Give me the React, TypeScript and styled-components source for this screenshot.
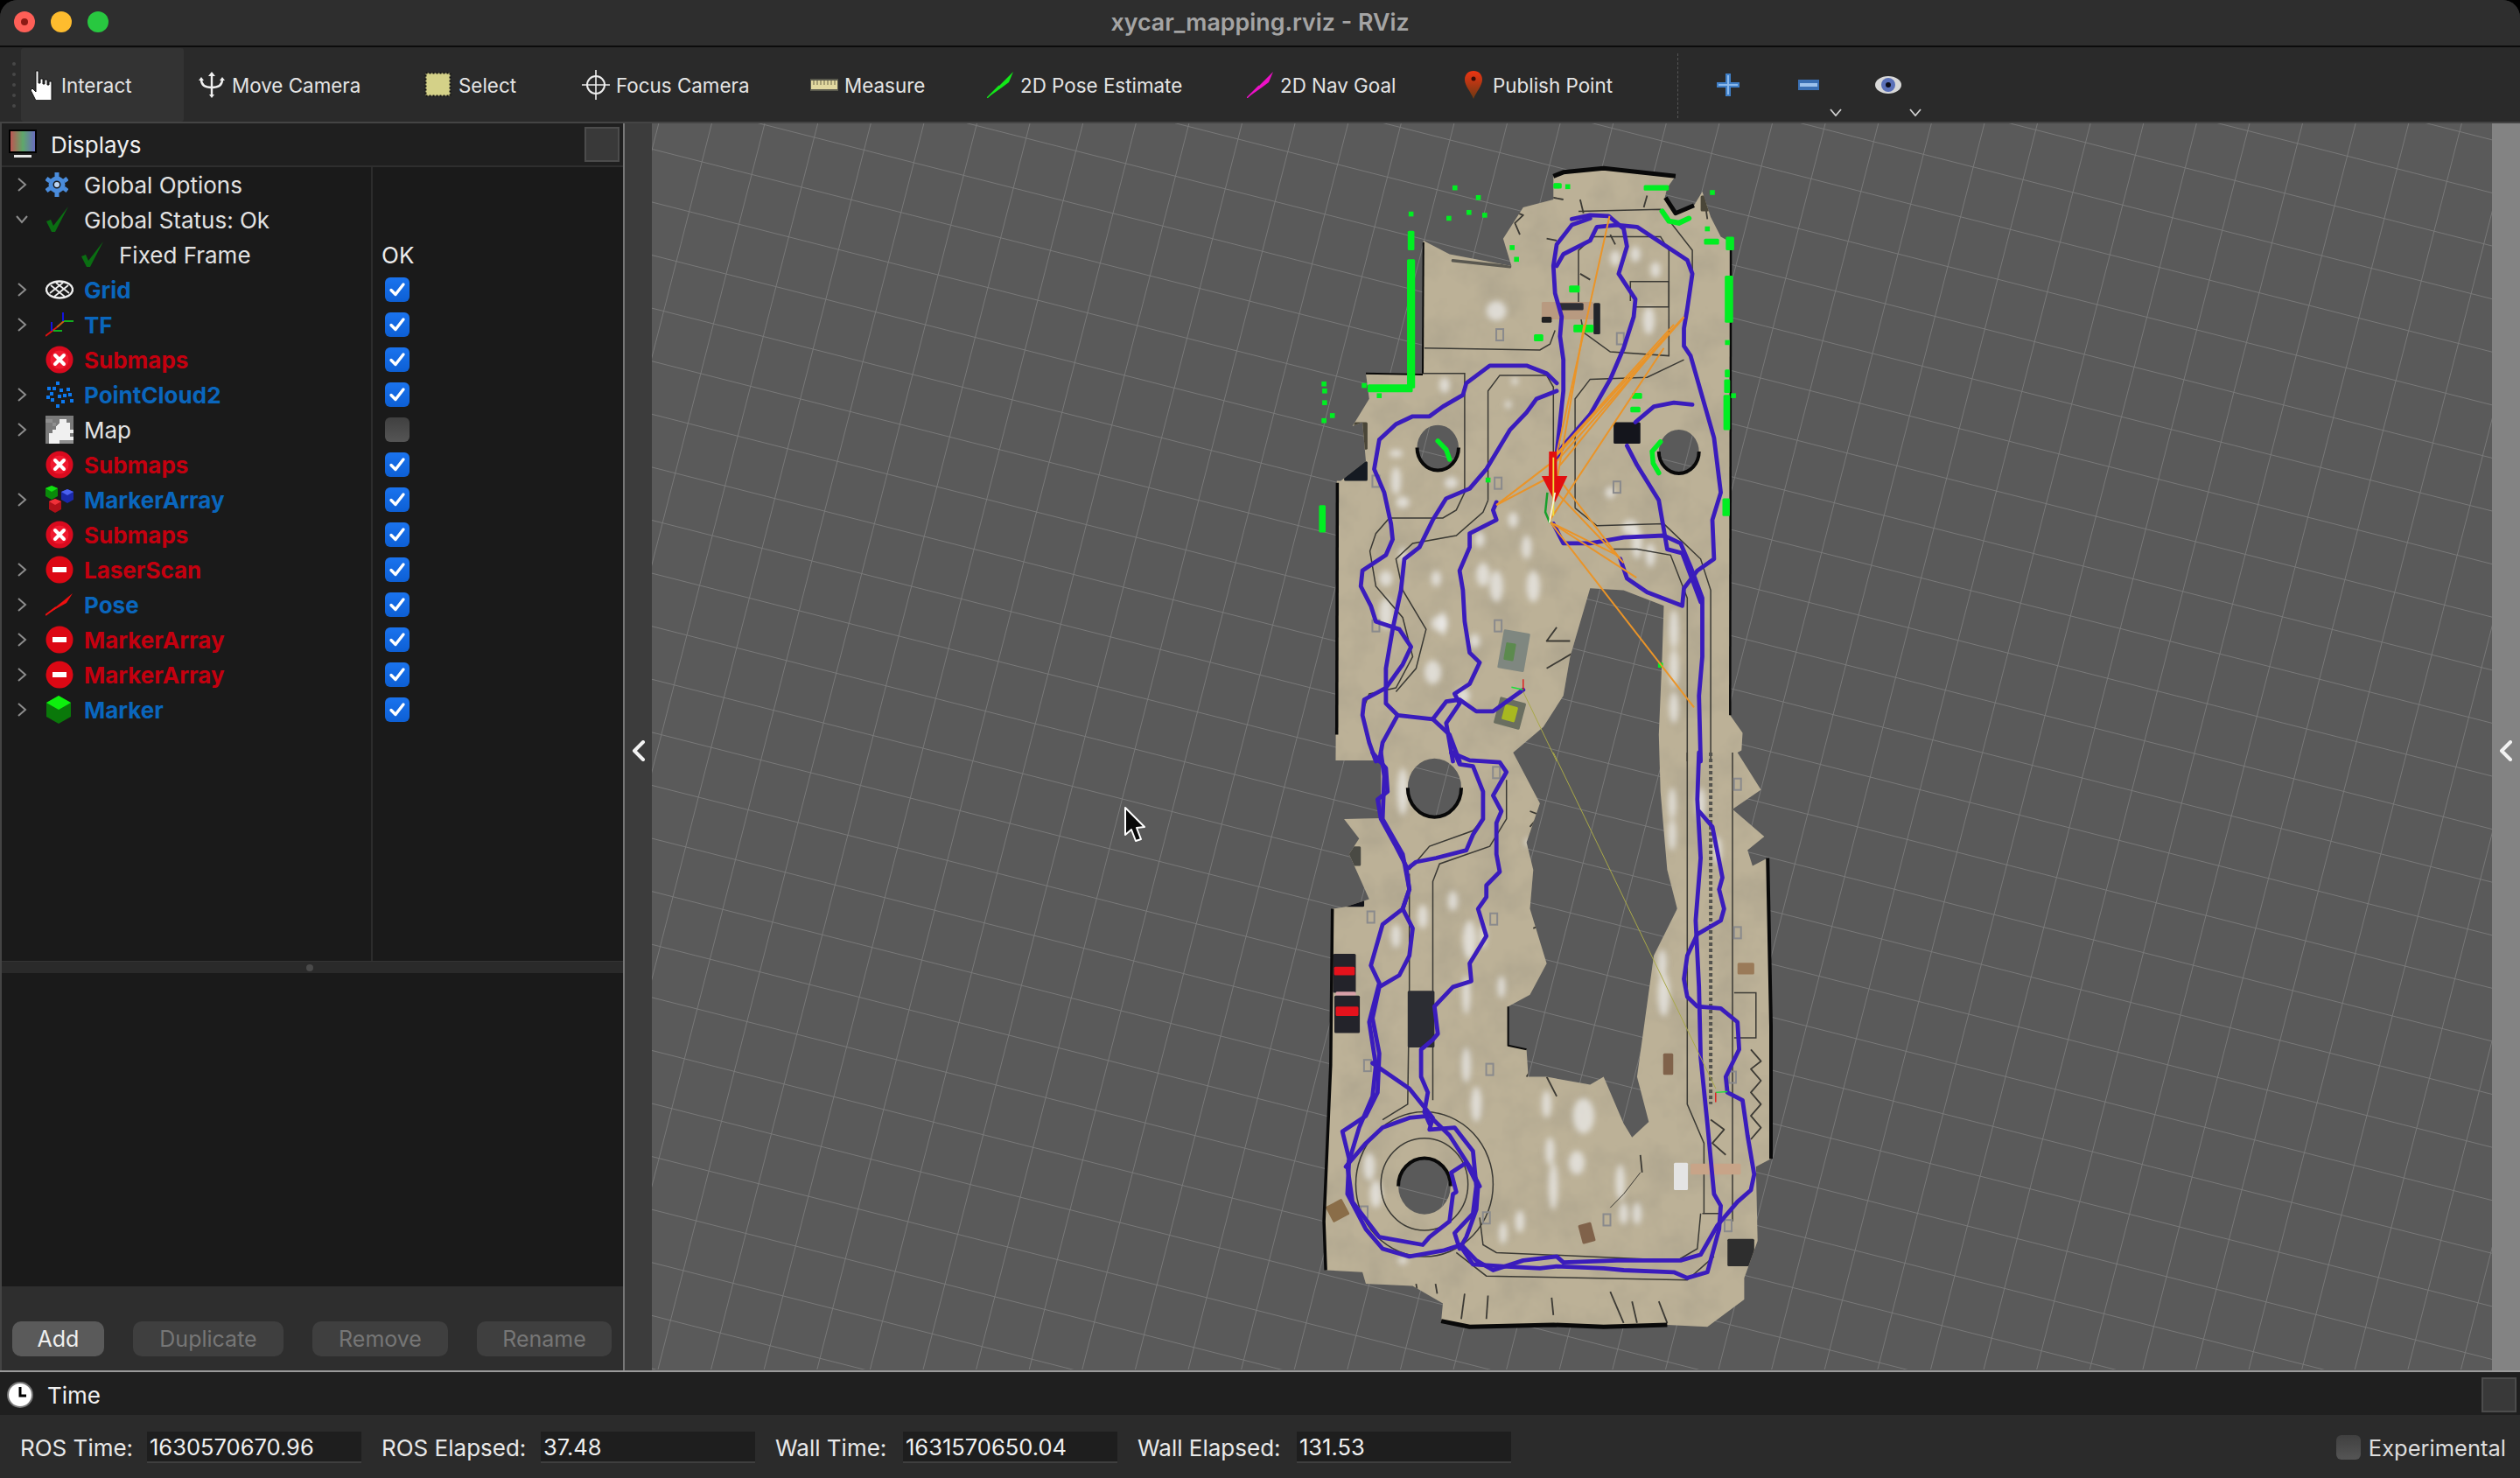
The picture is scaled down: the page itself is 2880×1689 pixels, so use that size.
import React from 'react';
import styled, { createGlobalStyle } from 'styled-components';

const GlobalStyle = createGlobalStyle`
  html, body {
    margin: 0;
    background: #000;
    overflow: hidden;
  }
  * { box-sizing: border-box; }
`;

const FONT = `Inter, "Liberation Sans", sans-serif`;

const Window = styled.div`
  width: 2880px;
  height: 1689px;
  display: flex;
  flex-direction: column;
  border-radius: 20px 20px 0 0;
  overflow: hidden;
  background: #2b2b2b;
  font-family: ${FONT};
  color: #e8e8e8;
`;

const TitleBar = styled.div`
  height: 54px;
  flex: none;
  display: flex;
  align-items: center;
  position: relative;
  padding-left: 16px;
  gap: 18px;
  background: #2e2e2e;
  border-bottom: 2px solid #0c0c0c;
`;

const Light = styled.span<{ $color: string }>`
  width: 24px;
  height: 24px;
  border-radius: 50%;
  background: ${p => p.$color};
  display: flex;
  align-items: center;
  justify-content: center;
  margin-top: -2px;
`;

const LightDot = styled.span`
  width: 8px;
  height: 8px;
  border-radius: 50%;
  background: #8c1a14;
`;

const Title = styled.div`
  flex: 1;
  text-align: center;
  font-size: 26.8px;
  font-weight: 600;
  color: #a4a4a4;
  margin-top: -3px;
  margin-right: 142px;
`;

const Toolbar = styled.div`
  height: 87px;
  flex: none;
  display: flex;
  align-items: stretch;
  background: #2a2a2a;
  border-bottom: 2px solid #444;
  padding-top: 1px;
`;

const Grip = styled.div`
  width: 24px;
  flex: none;
  display: flex;
  flex-direction: column;
  justify-content: center;
  align-items: center;
  gap: 8px;
  padding-left: 8px;
  span { width: 4px; height: 4px; border-radius: 50%; background: #474747; }
`;

const Tool = styled.div<{ $active?: boolean }>`
  display: flex;
  align-items: center;
  gap: 7px;
  padding: 0 0 0 9px;
  margin-right: 7px;
  border-radius: 3px;
  background: ${p => (p.$active ? '#333333' : 'transparent')};
  font-size: 22.4px;
  color: #e4e4e4;
  white-space: nowrap;
`;

const ToolLabel = styled.span<{ $width: number }>`
  width: ${p => p.$width}px;
`;

const Separator = styled.div`
  width: 0;
  margin: 6px 0 4px 0;
  border-left: 1px dashed #555;
`;

const ViewTool = styled.div<{ $width: number; $left: number }>`
  width: ${p => p.$width}px;
  margin-left: ${p => p.$left}px;
  flex: none;
  position: relative;
  display: flex;
  align-items: center;
  justify-content: center;
`;

const Caret = styled.svg`
  position: absolute;
  right: -3px;
  bottom: 6px;
`;

const Main = styled.div`
  flex: 1;
  min-height: 0;
  display: flex;
`;

const Sidebar = styled.div`
  width: 712px;
  flex: none;
  display: flex;
  flex-direction: column;
  border-left: 2px solid #444;
  background: #1a1a1a;
`;

const DockHeader = styled.div<{ $height: number; $nudge?: number }>`
  height: ${p => p.$height}px;
  flex: none;
  display: flex;
  align-items: center;
  gap: 16px;
  padding: ${p => p.$nudge ?? 0}px 4px 0 8px;
  background: #1f1f1f;
  font-size: 26px;
  color: #f0f0f0;
`;

const DockTitle = styled.span`
  flex: 1;
`;

const FloatButton = styled.div`
  width: 40px;
  height: 40px;
  background: #393939;
  border: 2px solid #4c4c4c;
`;

const Tree = styled.div`
  height: 909px;
  flex: none;
  border-top: 2px solid #2e2e2e;
  background: #1a1a1a;
  display: flex;
  flex-direction: column;
  position: relative;
`;

const Row = styled.div`
  height: 40px;
  flex: none;
  display: flex;
  align-items: center;
  font-size: 26px;
`;

const NameCell = styled.div<{ $indent: number }>`
  width: 424px;
  height: 100%;
  flex: none;
  display: flex;
  align-items: center;
  padding-left: ${p => p.$indent}px;
  border-right: 2px solid #2c2c2c;
`;

const Arrow = styled.div`
  width: 50px;
  flex: none;
  display: flex;
  align-items: center;
  padding-left: 16px;
`;

const IconSlot = styled.div`
  width: 44px;
  flex: none;
  display: flex;
  align-items: center;
`;

const Name = styled.span<{ $tone: 'plain' | 'blue' | 'red' }>`
  color: ${p => (p.$tone === 'blue' ? '#0a66bd' : p.$tone === 'red' ? '#c4000f' : '#e2e2e2')};
  font-weight: ${p => (p.$tone === 'plain' ? 400 : 700)};
  white-space: nowrap;
`;

const ValueCell = styled.div`
  padding-left: 10px;
  flex: 1;
  display: flex;
  align-items: center;
  color: #ececec;
`;

const Check = styled.div<{ $on: boolean }>`
  width: 28px;
  height: 28px;
  margin-left: 4px;
  border-radius: 6px;
  display: flex;
  align-items: center;
  justify-content: center;
  background: ${p => (p.$on ? 'linear-gradient(#1a73ee, #0d5fd4)' : 'linear-gradient(#404040, #555)')};
`;

const TreeFill = styled.div`
  flex: 1;
  width: 424px;
  border-right: 2px solid #2c2c2c;
`;

const Splitter = styled.div`
  height: 14px;
  flex: none;
  background: #2a2a2a;
  border-top: 1px solid #333;
  display: flex;
  align-items: center;
  justify-content: center;
  padding-right: 6px;
  span { width: 8px; height: 8px; border-radius: 50%; background: #4a4a4a; }
`;

const Description = styled.div`
  flex: 1;
  background: #1a1a1a;
`;

const ButtonBar = styled.div`
  height: 96px;
  flex: none;
  background: #2e2e2e;
  padding: 40px 0 0 12px;
  display: flex;
  gap: 33px;
`;

const PanelButton = styled.div<{ $width: number; $off?: boolean }>`
  width: ${p => p.$width}px;
  height: 40px;
  border-radius: 10px;
  display: flex;
  align-items: center;
  justify-content: center;
  font-size: 25px;
  background: ${p => (p.$off ? '#3f3f3f' : '#5a5a5a')};
  color: ${p => (p.$off ? '#767676' : '#efefef')};
`;

const LeftStrip = styled.div`
  width: 33px;
  flex: none;
  background: #3c3c3c;
  border-left: 2px solid #777;
  display: flex;
  align-items: center;
  justify-content: center;
  padding-top: 8px;
`;

const Viewport = styled.div`
  flex: 1;
  min-width: 0;
  background: #5a5a5a;
  svg { display: block; }
`;

const RightStrip = styled.div`
  width: 32px;
  flex: none;
  background: #838383;
  display: flex;
  align-items: center;
  justify-content: center;
  padding-top: 8px;
`;

const TimeDock = styled.div`
  height: 123px;
  flex: none;
  display: flex;
  flex-direction: column;
  border-top: 2px solid #9a9a9a;
`;

const TimeBar = styled.div`
  flex: 1;
  display: flex;
  align-items: center;
  background: #2b2b2b;
  font-size: 26px;
  padding: 2px 16px 0 0;
`;

const Stamp = styled.div`
  display: flex;
  align-items: center;
  margin-left: 23px;
  color: #e8e8e8;
  font-size: 26px;
  white-space: nowrap;
`;

const StampLabel = styled.span<{ $width: number }>`
  width: ${p => p.$width}px;
`;

const Field = styled.div`
  width: 245px;
  height: 36px;
  background: #1e1e1e;
  border-bottom: 2px solid #3f3f3f;
  padding-left: 3px;
  display: flex;
  align-items: center;
  font-size: 25.5px;
  color: #f0f0f0;
`;

const Experimental = styled.div`
  margin-left: auto;
  display: flex;
  align-items: center;
  gap: 9px;
  font-size: 25.5px;
  color: #dedede;
`;

const PlainCheck = styled(Check)`
  margin: 0;
`;

// --- map drawing: point lists are read off two crops of the view, so they go through these two scalers
type Pt = [number, number];
const SX = 600 / 1568;
const SY = 700 / 1568;
const T = (x: number, y: number): Pt => [1450 + x * SX, 170 + y * SY];
const B = (x: number, y: number): Pt => [1450 + x * SX, 860 + y * SY];
const parse = (map: typeof T, s: string): Pt[] =>
  s.trim().split(/\s+/).map(p => {
    const [x, y] = p.split(',').map(Number);
    return map(x, y);
  });
const line = (pts: Pt[], close = false) =>
  'M' + pts.map(p => `${p[0].toFixed(1)} ${p[1].toFixed(1)}`).join('L') + (close ? 'Z' : '');
const tp = (s: string) => line(parse(T, s));
const bp = (s: string) => line(parse(B, s));

const ellipsePath = ([cx, cy]: Pt, rx: number, ry: number) => {
  const a = rx * SX;
  const b = ry * SY;
  return `M${cx - a} ${cy}a${a} ${b} 0 1 0 ${2 * a} 0a${a} ${b} 0 1 0 ${-2 * a} 0Z`;
};

// half of a hole's edge, the part that shows its dark wall
const rimPath = ([cx, cy]: Pt, rx: number, ry: number, lower = true) => {
  const a = rx * SX;
  const b = ry * SY;
  return `M${cx - a} ${cy}A${a} ${b} 0 0 ${lower ? 0 : 1} ${cx + a} ${cy}`;
};

const outline = [
  ...parse(T, `850,70 880,60 1000,50 1215,70 1190,100 1182,128 1215,165 1270,145 1295,110 1320,175 1350,225 1380,240
    1378,1450 1415,1495 1412,1540`),
  ...parse(B, `1400,0 1470,95 1385,145 1480,215 1430,250 1445,290 1490,270 1500,700 1500,1040 1455,1060 1460,1250
    1420,1345 1420,1400 1310,1470 1190,1465 1000,1470 850,1465 600,1470 515,1455 520,1410 430,1365 290,1360 280,1330
    170,1325 165,1200 185,800 190,400 230,395 300,375 240,260 270,220 225,170 335,168 335,20 200,20`),
  ...parse(T, `203,850 215,850 290,800 280,700 250,710 300,640 290,575 460,575 462,235 540,270 725,300 700,230 760,150 850,130`),
];

const voidPoly = [
  ...parse(T, `960,1125 1060,1130 1180,1170 1175,1300 1165,1500`),
  ...parse(B, `1170,100 1180,200 1190,300 1220,400 1150,520 1100,830 1135,945 1085,985 1060,950 1000,830 960,850 830,830
    775,830 770,760 715,750 715,650 780,620 830,540 780,400 790,300 770,230 810,130 730,0`),
  ...parse(T, `820,1480 880,1400 900,1300`),
];

const holes: { at: Pt; rx: number; ry: number; lower: boolean }[] = [
  { at: T(505, 765), rx: 62, ry: 58, lower: true },
  { at: T(1225, 775), rx: 60, ry: 56, lower: true },
  { at: B(495, 90), rx: 80, ry: 75, lower: true },
  { at: B(465, 1110), rx: 78, ry: 72, lower: false },
];

const floorPath = [
  line(outline, true),
  line(voidPoly, true),
  ...holes.map(h => ellipsePath(h.at, h.rx, h.ry)),
].join('');

const spots: [typeof T, number, number, number, number][] = [
  [T, 680, 415, 30, 25], [T, 1095, 270, 15, 20], [T, 1035, 280, 15, 20], [T, 1155, 310, 15, 20], [T, 1135, 440, 18, 35],
  [T, 525, 605, 15, 20], [T, 735, 595, 10, 10], [T, 715, 655, 10, 10], [T, 380, 850, 15, 35], [T, 380, 780, 20, 10],
  [T, 545, 855, 20, 15], [T, 400, 905, 20, 15], [T, 730, 950, 15, 20], [T, 630, 1000, 15, 20], [T, 770, 1020, 15, 30],
  [T, 1100, 1010, 15, 40], [T, 1140, 1040, 15, 30], [T, 640, 1090, 20, 30], [T, 790, 1120, 20, 40], [T, 680, 1120, 20, 40],
  [T, 500, 1100, 15, 20], [T, 510, 1215, 25, 20], [T, 350, 1190, 20, 40], [T, 490, 1340, 25, 30], [T, 400, 1040, 10, 20],
  [T, 350, 1100, 20, 20], [T, 1210, 1230, 14, 50], [T, 1210, 1330, 14, 50], [T, 1210, 1430, 14, 40], [T, 1080, 970, 25, 20],
  [T, 1020, 880, 15, 15], [T, 580, 1400, 20, 20], [T, 520, 1215, 12, 30], [T, 615, 1260, 16, 18],
  [B, 400, 100, 16, 60], [B, 550, 380, 15, 25], [B, 460, 420, 15, 30], [B, 380, 470, 15, 30], [B, 600, 480, 20, 50],
  [B, 640, 470, 10, 30], [B, 590, 620, 12, 50], [B, 695, 600, 12, 28], [B, 590, 800, 14, 45], [B, 620, 900, 16, 45],
  [B, 830, 900, 14, 35], [B, 940, 930, 32, 45], [B, 840, 1020, 14, 35], [B, 850, 1110, 14, 60], [B, 1050, 1100, 14, 45],
  [B, 1060, 1180, 14, 28], [B, 1205, 130, 12, 40], [B, 1205, 210, 12, 40], [B, 1180, 620, 18, 55], [B, 1175, 540, 14, 35],
  [B, 300, 1060, 18, 35], [B, 320, 1130, 18, 35], [B, 400, 1300, 15, 10], [B, 750, 1200, 14, 28], [B, 775, 230, 10, 10],
  [B, 1100, 1180, 14, 28], [B, 1290, 130, 14, 40], [B, 1340, 250, 12, 35], [B, 700, 1230, 12, 28], [B, 920, 1050, 24, 30],
];

const pads: [typeof T, number, number][] = [
  [T, 690, 475], [T, 685, 855], [T, 1040, 865], [T, 685, 1220], [T, 1050, 485], [T, 320, 850], [T, 320, 1220],
  [B, 305, 420], [B, 672, 425], [B, 660, 810], [B, 1400, 80], [B, 1400, 460], [B, 1385, 830], [B, 1372, 1210],
  [B, 1010, 1195], [B, 650, 1190], [B, 285, 1175], [B, 295, 800], [B, 680, 50],
];

const lanes = [
  tp('465,510 810,515 840,500 855,465'),
  tp('290,575 585,575 585,880 560,925 520,945 360,945 320,985 302,1030 320,1120 400,1200 430,1300 380,1380 300,1395 280,1440'),
  tp('655,900 655,620 690,580 830,580 850,610 850,780'),
  tp('655,900 640,930 560,990 430,1010 380,1050 400,1130 470,1230 440,1330 380,1390'),
  tp('925,400 925,260 970,225 1170,225 1195,260 1195,530 1020,520 940,470 925,400'),
  tp('915,920 915,640 960,590 1130,585 1240,540'),
  tp('915,920 980,965 1180,960 1290,1050 1320,1130 1320,1568'),
  tp('1250,1568 1250,1150 1200,1040 1100,1025 1020,1025'),
  tp('925,160 1170,155 1265,260 1265,330'),
  tp('1080,390 1080,340 1195,340 1195,405 1090,405'),
  bp('420,310 420,600 415,900 340,940'),
  bp('490,890 490,330 510,285 660,240 710,170 710,70'),
  bp('420,300 480,240 610,200 640,170'),
  bp('1250,0 1250,900 1300,1000 1300,1180'),
  bp('1385,0 1385,1200'),
  bp('630,1190 640,1260 680,1280 1220,1300 1280,1270 1290,1180'),
  bp('560,1280 650,1340 1250,1350 1330,1290'),
  bp('1390,615 1455,615 1455,730 1390,730'),
  bp('1295,1180 1350,1180'),
];

// furniture and clutter the scan left along the walls
const clutter = [
  bp('585,1385 575,1450'), bp('655,1390 650,1450'), bp('845,1395 850,1440'), bp('1020,1380 1060,1460'),
  bp('1085,1405 1100,1460'), bp('1165,1405 1190,1460'), bp('440,1360 445,1385'), bp('498,1360 503,1385'),
  bp('1440,760 1470,790 1440,810 1470,840 1440,870 1470,900 1440,930 1470,960 1440,990'),
  bp('1320,940 1360,965 1325,1000 1365,1030'),
  bp('780,150 810,160 780,190'), bp('790,400 840,430 790,450'), bp('770,830 800,790'), bp('830,830 860,880'),
  bp('1110,1030 1115,1075'),
  tp('730,160 760,170 735,190 750,220'), tp('1300,120 1310,180'), tp('820,120 880,130'), tp('1120,150 1130,120'),
  tp('930,130 940,165'), tp('830,230 860,235'), tp('930,320 960,335'), tp('1020,220 1035,245'),
  tp('860,1225 830,1260 900,1260'), tp('830,1330 910,1290'),
];

const trajectories = [
  tp(`905,180 960,170 1015,172 1060,205 1070,250 1045,320 1095,385 1090,430 1060,510 1020,590 960,680 880,760 860,790`),
  tp(`960,178 905,195 860,245 850,300 855,370 875,430 870,480 880,540 880,620 870,700 860,780`),
  tp(`860,300 880,270 960,235 980,200 1040,195 1100,200 1170,240 1250,285 1265,320 1250,410 1240,460 1240,505 1260,530
    1290,620 1330,740 1350,880 1325,950 1330,1050 1280,1080 1240,1125 1235,1170 1130,1135 1070,1100 1050,1050`),
  tp(`850,960 880,1010 960,1010 1060,995 1180,990 1230,1010 1260,1070 1295,1150 1295,1300 1285,1400 1290,1568`),
  tp(`1070,760 1100,810 1165,900 1175,950 1190,1025 1235,1035 1290,1160`),
  tp(`1095,700 1150,660 1210,650 1265,655`),
  tp(`860,600 830,575 770,555 660,555 590,600 580,630 520,660 480,685 430,685 380,705 330,745 315,820 345,880 365,960
    370,1000 350,1040 280,1080 275,1120 305,1170 320,1210 390,1230 425,1275 400,1320 350,1380 285,1410 280,1450 300,1520 320,1568`),
  tp(`860,620 800,640 770,675 720,720 650,820 600,870 530,895 490,950 450,1020 405,1050 395,1130 370,1230 350,1330 350,1420
    385,1450 490,1460 530,1415 570,1410 620,1440 670,1440 760,1385`),
  tp(`680,905 670,925 680,950 600,985 600,1020 570,1080 580,1130 585,1210 600,1290 630,1315 600,1370 555,1395 570,1420 530,1470 550,1568`),
  tp(`385,1450 340,1520 330,1568`),
  tp(`490,1460 540,1500 570,1568`),
  bp(`310,0 350,40 355,100 325,120 335,170 380,240 410,290 420,350 400,400 430,450 420,520 390,570 330,600 310,680 330,770 325,870
    290,930 220,970 240,1040 235,1130 290,1220 340,1270 420,1290 520,1275 575,1260 620,1300 670,1325 760,1300 860,1290 880,1305
    1040,1300 1230,1300 1290,1285 1340,1210 1400,1150 1440,1120 1450,1080 1430,980 1415,890 1370,870 1365,830 1405,760 1400,690
    1350,655 1280,650 1250,625 1240,580 1250,520 1280,465 1350,430 1360,400 1345,350 1355,320 1325,190 1285,150`),
  bp(`335,0 345,60 340,170 400,260 420,350 400,400 340,440 305,545 330,590 300,690 320,800 310,880 270,960 235,1060 250,1150 330,1240
    460,1260 480,1240 540,1200 550,1130 560,1125 545,1075 590,1050 625,1110 620,1170 590,1240 570,1270 555,1230 610,1180 620,1110
    610,1020 555,960 480,965 490,935 420,860 310,795`),
  bp(`230,1060 290,1000 340,960 420,935 480,930 540,980 600,1060 630,1110`),
  bp(`555,0 570,30 610,35 640,100 640,170 610,210 590,250 500,270 440,280 410,300`),
  bp(`545,0 600,20 690,25 710,50 670,110 695,150 680,180 680,260 690,305 650,340 650,370 625,400 650,470 600,540 605,585 550,600
    495,650 505,720 490,735 455,760 455,830 475,870 465,920 480,950`),
  bp(`1285,0 1280,120 1290,270 1275,430 1285,600 1290,780 1310,950 1330,1130 1350,1160 1345,1220 1310,1330 1250,1345 1210,1330
    1060,1325 1000,1320 860,1315 810,1320 700,1315 610,1310 570,1260`),
];

const rays: [number, number, number, number][] = [
  [855, 800, 1018, 172], [840, 950, 942, 450], [855, 790, 1240, 430], [860, 800, 1240, 432], [870, 810, 1195, 470],
  [840, 950, 1180, 510], [680, 912, 850, 800], [680, 912, 840, 840], [840, 955, 1098, 1098], [860, 880, 1060, 1060],
  [880, 860, 1050, 1050], [840, 955, 1270, 1430], [850, 960, 1040, 1040], [850, 790, 1210, 450],
];

const greenDots: Pt[] = [
  [556, 100], [626, 125], [425, 167], [598, 163], [645, 170], [538, 178], [860, 95], [893, 97], [1325, 112], [1310, 205],
  [727, 253], [740, 283], [165, 602], [167, 620], [167, 650], [190, 683], [165, 696], [285, 606], [330, 632], [1370, 496],
  [1170, 1322], [655, 848], [1388, 632],
];

const greenBars: [number, number, number, number][] = [
  [415, 210, 20, 50], [413, 283, 24, 330], [295, 603, 135, 20], [1120, 93, 75, 14], [850, 88, 25, 14], [1300, 230, 45, 15],
  [1365, 225, 25, 35], [1362, 325, 25, 120], [1362, 565, 15, 20], [1360, 590, 18, 35], [1358, 630, 20, 90], [1355, 895, 22, 45],
  [150, 912, 20, 70], [897, 350, 32, 18], [792, 475, 28, 18], [910, 450, 60, 20], [1085, 625, 30, 15], [1080, 660, 30, 15],
];

const viewBox = { x: 745, y: 141, w: 2103, h: 1424 };

const gridOrigin: Pt = [802.2, 184.9];
const gridU: Pt = [56.9, 14.47];
const gridV: Pt = [-14.56, 56.89];

const gridLines = () => {
  const out: string[] = [];
  for (let n = -30; n < 70; n++) {
    const a: Pt = [gridOrigin[0] + n * gridV[0], gridOrigin[1] + n * gridV[1]];
    out.push(`M${a[0] - 60 * gridU[0]} ${a[1] - 60 * gridU[1]}L${a[0] + 60 * gridU[0]} ${a[1] + 60 * gridU[1]}`);
    const b: Pt = [gridOrigin[0] + n * gridU[0], gridOrigin[1] + n * gridU[1]];
    out.push(`M${b[0] - 60 * gridV[0]} ${b[1] - 60 * gridV[1]}L${b[0] + 60 * gridV[0]} ${b[1] + 60 * gridV[1]}`);
  }
  return out.join('');
};

const Box = ({ map, x, y, w, h, fill, rot = 0 }: { map: typeof T; x: number; y: number; w: number; h: number; fill: string; rot?: number }) => {
  const [px, py] = map(x, y);
  const bw = w * SX;
  const bh = h * SY;
  return <rect x={px} y={py} width={bw} height={bh} rx="1.5" fill={fill} transform={rot ? `rotate(${rot} ${px + bw / 2} ${py + bh / 2})` : undefined} />;
};

function MapView() {
  return (
    <svg width="2103" height="1424" viewBox={`${viewBox.x} ${viewBox.y} ${viewBox.w} ${viewBox.h}`}>
      <defs>
        <clipPath id="floorClip">
          <path d={floorPath} clipRule="evenodd" />
        </clipPath>
        <filter id="mottle" x="0" y="0" width="100%" height="100%">
          <feTurbulence type="fractalNoise" baseFrequency="0.022" numOctaves="4" seed="7" />
          <feColorMatrix type="matrix" values="0 0 0 0 0.32  0 0 0 0 0.29  0 0 0 0 0.22  0 0 0 0.7 -0.27" />
        </filter>
        <filter id="soft"><feGaussianBlur stdDeviation="3" /></filter>
      </defs>

      <path d={gridLines()} stroke="#797979" strokeWidth="1" fill="none" />

      <path d={floorPath} fill="#bcb197" fillRule="evenodd" />
      <g clipPath="url(#floorClip)">
        <rect x="1500" y="170" width="560" height="1400" fill="#b8ac91" filter="url(#mottle)" />
        <g filter="url(#soft)" fill="#f0f0f0" fillOpacity="0.7">
          {spots.map(([m, x, y, rx, ry], i) => {
            const [cx, cy] = m(x, y);
            return <ellipse key={i} cx={cx} cy={cy} rx={rx * SX} ry={ry * SY} />;
          })}
        </g>
        <g stroke="#3a3934" strokeWidth="1.5" fill="none">
          {lanes.map((d, i) => <path key={i} d={d} />)}
          <path d={ellipsePath(B(465, 1105), 205, 185)} />
          <path d={ellipsePath(B(465, 1105), 130, 118)} />
        </g>
        <path d={bp('1320,0 1320,900')} stroke="#55544e" strokeWidth="4" strokeDasharray="4 3" fill="none" />
        <g fill="none" stroke="#8a8a8c" strokeWidth="2">
          {pads.map(([m, x, y], i) => {
            const [px, py] = m(x, y);
            return <rect key={i} x={px - 4} y={py - 6} width="8" height="13" />;
          })}
        </g>
        <g stroke="#3c3a34" strokeWidth="1.8" fill="none" strokeLinejoin="round">
          {clutter.map((d, i) => <path key={i} d={d} />)}
          <path d={bp('1110,1075 1060,1130 1020,1165')} strokeWidth="1" />
        </g>

        {/* things standing on the floor */}
        <Box map={T} x={815} y={392} w={155} h={45} fill="#b89a80" />
        <Box map={T} x={865} y={395} w={75} h={18} fill="#2e2e34" />
        <Box map={T} x={970} y={395} w={20} h={80} fill="#23242a" />
        <Box map={T} x={815} y={430} w={30} h={15} fill="#222" />
        <Box map={T} x={1030} y={700} w={80} h={55} fill="#14151c" />
        <Box map={T} x={692} y={1235} w={80} h={100} fill="#7f8780" rot={10} />
        <Box map={T} x={705} y={1265} w={30} h={45} fill="#5c8a4e" rot={10} />
        <Box map={T} x={680} y={1410} w={80} h={70} fill="#6a6e60" rot={15} />
        <Box map={T} x={700} y={1425} w={40} h={40} fill="#a8b820" rot={15} />
        <Box map={T} x={545} y={290} w={180} h={8} fill="#5a5850" rot={6} />
        <Box map={T} x={225} y={800} w={70} h={50} fill="#151a22" />
        <Box map={T} x={725} y={130} w={30} h={20} fill="#4a4638" />
        <Box map={T} x={1290} y={120} w={25} h={40} fill="#4a4638" />
        <Box map={T} x={255} y={700} w={40} h={70} fill="#4a4638" />
        <Box map={B} x={192} y={515} w={68} h={100} fill="#23232a" />
        <Box map={B} x={195} y={548} w={62} h={22} fill="#e4121c" />
        <Box map={B} x={200} y={612} w={60} h={10} fill="#d8a0a8" />
        <Box map={B} x={196} y={622} w={76} h={96} fill="#23232a" />
        <Box map={B} x={200} y={650} w={68} h={24} fill="#e4121c" />
        <Box map={B} x={415} y={610} w={80} h={145} fill="#2c2d33" />
        <Box map={B} x={1210} y={1050} w={42} h={70} fill="#e4e4e4" />
        <Box map={B} x={1260} y={1052} w={150} h={28} fill="#c8a488" />
        <Box map={B} x={1370} y={1245} w={80} h={70} fill="#2e2e2e" />
        <Box map={B} x={178} y={1150} w={55} h={45} fill="#8a6d48" rot={-28} />
        <Box map={B} x={1400} y={538} w={50} h={30} fill="#9a7a58" />
        <Box map={B} x={930} y={1205} w={40} h={50} fill="#80624a" rot={-15} />
        <Box map={B} x={1178} y={770} w={30} h={55} fill="#80624a" />
        <Box map={B} x={230} y={350} w={55} h={45} fill="#101218" />
        <Box map={B} x={235} y={240} w={40} h={50} fill="#4a4a44" />
      </g>

      {/* dark scan edges round the floor */}
      <g stroke="#090909" strokeWidth="3.5" fill="none" strokeLinejoin="round">
        <path d={tp('850,70 880,60 1000,50 1215,70')} strokeWidth="5" />
        <path d={tp('205,855 203,1500')} />
        <path d={tp('460,575 462,240')} strokeWidth="2" />
        <path d={tp('290,575 460,578')} strokeWidth="2" />
        <path d={tp('1380,240 1378,1450')} strokeWidth="2.5" />
        <path d={bp('190,400 185,800 165,1200 170,1325')} />
        <path d={bp('1490,270 1500,700 1500,1040')} strokeWidth="4" />
        <path d={bp('515,1455 600,1470 850,1465 1000,1470 1190,1465')} strokeWidth="5" />
        {holes.map((h, i) => <path key={i} d={rimPath(h.at, h.rx, h.ry, h.lower)} strokeWidth="4" />)}
        <path d={bp('715,650 715,750 770,760')} strokeWidth="2" />
        <path d={tp('1185,125 1215,165 1270,145')} strokeWidth="5" />
      </g>

      {/* scan points */}
      <g fill="#00ee22">
        {greenBars.map(([x, y, w, h], i) => <Box key={i} map={T} x={x} y={y} w={w} h={h} fill="#00ee22" />)}
        {greenDots.map(([x, y], i) => {
          const [px, py] = T(x, y);
          return <rect key={i} x={px - 2.8} y={py - 2.8} width="5.6" height="5.6" />;
        })}
      </g>
      <g stroke="#00ee22" fill="none" strokeLinecap="round">
        <path d={tp('1175,160 1195,185 1225,190 1255,178')} strokeWidth="6" />
        <path d={tp('505,748 530,770 540,795')} strokeWidth="5.5" />
        <path d={tp('1170,750 1145,775 1148,805 1165,830')} strokeWidth="5.5" />
      </g>

      {/* trajectory */}
      <g stroke="#3a1cbc" strokeWidth="4.8" fill="none" strokeLinejoin="round" strokeLinecap="round">
        {trajectories.map((d, i) => <path key={i} d={d} />)}
      </g>

      {/* thin links */}
      <path d={`${tp('760,1390 860,1568')}${bp('850,0 1335,860')}`} stroke="#a8a848" strokeWidth="1" fill="none" />
      <g stroke="#ea9428" strokeWidth="2" fill="none">
        {rays.map(([a, b, c, d], i) => <path key={i} d={line([T(a, b), T(c, d)])} />)}
      </g>

      {/* robot pose */}
      <path d={line(parse(T, '837,775 860,775 862,845 836,845'), true)} fill="#e20f0f" />
      <path d={line(parse(T, '815,838 892,838 855,905'), true)} fill="#e20f0f" />
      <path d={tp('850,790 850,940')} stroke="#f2e03a" strokeWidth="1.8" fill="none" />
      <path d={tp('832,880 826,930 840,958')} stroke="#18a02c" strokeWidth="2.5" fill="none" />
      <path d={tp('838,958 855,880')} stroke="#f6f6d8" strokeWidth="1.8" fill="none" />
      <path d={tp('760,1385 725,1378')} stroke="#19e03a" strokeWidth="1.4" fill="none" />
      <path d={tp('760,1385 760,1358')} stroke="#e01818" strokeWidth="1.4" fill="none" />
      <path d={bp('1335,870 1370,868')} stroke="#19e03a" strokeWidth="1.4" fill="none" />
      <path d={bp('1335,870 1335,895')} stroke="#e01818" strokeWidth="1.4" fill="none" />

      {/* mouse pointer */}
      <path d="M1286 923l0 31 7-6 5 13 6-2-5-13 9-1z" fill="#0a0a0a" stroke="#fff" strokeWidth="2" strokeLinejoin="round" />
    </svg>
  );
}

// --- small icons
const HandIcon = () => (
  <svg width="30" height="34" viewBox="0 0 30 34">
    <path d="M8 1h3v14h2V10h3v6h2v-5h3v6h2v-4h3v22H8l-6-12 2-2 4 4z" fill="#fff" stroke="#111" strokeWidth="1" />
  </svg>
);

const MoveIcon = () => (
  <svg width="32" height="30" viewBox="0 0 32 30">
    <g stroke="#f0f0f0" strokeWidth="2.4" fill="none">
      <path d="M16 3v24" />
      <path d="M4 9c0 7 6 9 12 9s12-2 12-9" />
    </g>
    <path d="M16 0l4 5h-8zM16 30l-3-4h6zM1 10l3-4 3 4zM25 10l3-4 3 4z" fill="#f0f0f0" />
  </svg>
);

const SelectIcon = () => (
  <svg width="32" height="30" viewBox="0 0 32 30">
    <rect x="1.5" y="1.5" width="28" height="26" fill="#d4d188" stroke="#111" strokeWidth="2" strokeDasharray="2 2" />
  </svg>
);

const FocusIcon = () => (
  <svg width="32" height="34" viewBox="0 0 32 34">
    <circle cx="16" cy="17" r="10" fill="none" stroke="#eee" strokeWidth="2" />
    <path d="M16 0v34M0 17h32" stroke="#eee" strokeWidth="1.6" />
  </svg>
);

const RulerIcon = () => (
  <svg width="32" height="14" viewBox="0 0 32 14">
    <rect width="32" height="14" fill="#5a5a4e" />
    <rect x="1" y="2" width="30" height="10" fill="#e2d9a0" />
    <path d="M4 2v5M8 2v5M12 2v5M16 2v5M20 2v5M24 2v5M28 2v5" stroke="#6a6448" strokeWidth="1" />
  </svg>
);

const SlashIcon = ({ color }: { color: string }) => (
  <svg width="31" height="30" viewBox="0 0 31 30">
    <path d="M0 30L17 13l13-13-5 12-8 6z" fill={color} />
    <path d="M0 30L14 16" stroke={color} strokeWidth="1.5" />
  </svg>
);

const PinIcon = () => (
  <svg width="27" height="32" viewBox="0 0 27 32">
    <defs>
      <linearGradient id="pinFill" x1="0" y1="0" x2="0" y2="1">
        <stop offset="0" stopColor="#ee3412" />
        <stop offset="1" stopColor="#6b3a14" />
      </linearGradient>
    </defs>
    <path d="M12 0c6 0 10 4 10 10 0 7-7 14-10 22C9 24 2 17 2 10 2 4 6 0 12 0z" fill="url(#pinFill)" />
    <circle cx="12" cy="9" r="2.5" fill="#3a0c06" />
  </svg>
);

const PlusIcon = () => (
  <svg width="26" height="26" viewBox="0 0 26 26">
    <path d="M10 0h6v10h10v6H16v10h-6V16H0v-6h10z" fill="#3f7fc8" />
    <path d="M12 2h2v10h10v2H14v10h-2V14H2v-2h10z" fill="#8bb8ea" />
  </svg>
);

const MinusIcon = () => (
  <svg width="24" height="12" viewBox="0 0 24 12">
    <rect width="24" height="12" fill="#3a70b4" />
    <rect x="2" y="4" width="20" height="4" fill="#9cc2ec" />
  </svg>
);

const EyeIcon = () => (
  <svg width="30" height="20" viewBox="0 0 30 20">
    <ellipse cx="15" cy="10" rx="15" ry="10" fill="#d8d8d8" />
    <circle cx="15" cy="10" r="8" fill="#5a70b8" />
    <circle cx="15" cy="10" r="3" fill="#0c0c18" />
  </svg>
);

const CaretIcon = () => (
  <Caret width="14" height="9" viewBox="0 0 14 9">
    <path d="M1 1l6 7 6-7" stroke="#cfcfcf" strokeWidth="1.8" fill="none" />
  </Caret>
);

const MonitorIcon = () => (
  <svg width="32" height="34" viewBox="0 0 32 34">
    <defs>
      <linearGradient id="bars" x1="0" y1="0" x2="1" y2="0">
        <stop offset="0" stopColor="#c45050" />
        <stop offset="0.5" stopColor="#5ea86a" />
        <stop offset="1" stopColor="#6a68c4" />
      </linearGradient>
    </defs>
    <rect x="1" y="1" width="30" height="25" fill="url(#bars)" stroke="#000" strokeWidth="2" />
    <rect x="6" y="29" width="20" height="3" fill="#e6e6e6" />
  </svg>
);

const GearIcon = () => (
  <svg width="26" height="30" viewBox="0 0 26 30">
    <g stroke="#4a8cdc" strokeWidth="5" fill="none">
      <circle cx="13" cy="15" r="7" />
      <path d="M13 1v5M13 24v5M1 8l4 3M21 19l4 3M25 8l-4 3M5 19l-4 3" />
    </g>
    <circle cx="13" cy="15" r="3" fill="#bcd6f4" />
  </svg>
);

const CheckGlyph = () => (
  <svg width="28" height="30" viewBox="0 0 28 30">
    <path d="M1 17l5-2 3 7L26 0 11 29H7z" fill="#0a6e12" />
  </svg>
);

const GridIcon = () => (
  <svg width="32" height="22" viewBox="0 0 32 22">
    <ellipse cx="16" cy="11" rx="15" ry="9.500" fill="none" stroke="#eee" strokeWidth="2.400" />
    <path d="M6 6l16 13M12 3l15 12M26 6L10 19M20 3L5 15" stroke="#eee" strokeWidth="1.800" />
  </svg>
);

const TfIcon = () => (
  <svg width="32" height="28" viewBox="0 0 32 28">
    <path d="M0 27L13 17" stroke="#e01010" strokeWidth="1.8" />
    <path d="M13 17L21 10" stroke="#c86010" strokeWidth="2" />
    <path d="M21 10h11M9 21h10" stroke="#10e020" strokeWidth="1.6" />
    <path d="M20 0v10M7 11v10" stroke="#1414e0" strokeWidth="2" />
  </svg>
);

const ErrorIcon = () => (
  <svg width="32" height="32" viewBox="0 0 32 32">
    <circle cx="16" cy="16" r="15.500" fill="#d90a1e" />
    <circle cx="16" cy="16" r="10.500" fill="#f01a30" />
    <path d="M11 11l10 10M21 11L11 21" stroke="#fff" strokeWidth="4" strokeLinecap="round" />
  </svg>
);

const WarnIcon = () => (
  <svg width="32" height="32" viewBox="0 0 32 32">
    <circle cx="16" cy="16" r="15.500" fill="#dc0814" />
    <rect x="8" y="13" width="16" height="6" fill="#fff" />
  </svg>
);

const CloudIcon = () => (
  <svg width="32" height="30" viewBox="0 0 32 30">
    <g fill="#0c78ee">
      {[[12, 0], [2, 6], [8, 6], [24, 7], [16, 8], [5, 12], [26, 13], [1, 16], [14, 15], [20, 14], [6, 19], [18, 21], [28, 20], [12, 26]].map(([x, y], i) => (
        <rect key={i} x={x} y={y} width="4" height="4" />
      ))}
    </g>
  </svg>
);

const MapIcon = () => (
  <svg width="32" height="32" viewBox="0 0 8 8" shapeRendering="crispEdges">
    <rect width="8" height="8" fill="#7a7a7a" />
    <path d="M4 1h2v1H4zM4 2h3v1H3zM2 4h6v1H2zM1 5h6v1H1zM1 6h7v1H1zM1 7h3v1H1zM3 3h4v1H3z" fill="#f0f0f0" />
    <path d="M0 1h2v1H0zM2 2h1v1H2zM4 7h4v1H4z" fill="#8e8e8e" />
  </svg>
);

const Cube = ({ x, y, top, side }: { x: number; y: number; top: string; side: string }) => (
  <g transform={`translate(${x} ${y})`}>
    <path d="M0 3l7-3 7 3v9l-7 4-7-4z" fill={side} />
    <path d="M0 3l7-3 7 3-7 4z" fill={top} />
  </g>
);

const MarkerArrayIcon = () => (
  <svg width="32" height="32" viewBox="0 0 32 32">
    <Cube x={0} y={0} top="#10e010" side="#0a8a0a" />
    <Cube x={18} y={4} top="#4a60f0" side="#1a28a8" />
    <Cube x={4} y={15} top="#f03038" side="#b01018" />
  </svg>
);

const PoseIcon = () => (
  <svg width="32" height="26" viewBox="0 0 32 26">
    <path d="M0 25L20 9 31 0l-7 11-9 5z" fill="#ee1010" />
    <path d="M0 25L12 16" stroke="#ee1010" strokeWidth="2" />
  </svg>
);

const MarkerIcon = () => (
  <svg width="30" height="32" viewBox="0 0 30 32">
    <path d="M1 8l14-8 14 8v16l-14 8-14-8z" fill="#0a780a" />
    <path d="M1 8l14-8 14 8-14 8z" fill="#0ef00e" />
  </svg>
);

const ClockIcon = () => (
  <svg width="30" height="32" viewBox="0 0 30 32">
    <circle cx="15" cy="16" r="14" fill="#fff" stroke="#777" strokeWidth="2" />
    <path d="M15 7v10h7" stroke="#000" strokeWidth="3" fill="none" />
  </svg>
);

const TickIcon = () => (
  <svg width="20" height="18" viewBox="0 0 20 18">
    <path d="M3 9.500l5 5L17 3" stroke="#fff" strokeWidth="3.400" fill="none" strokeLinecap="round" strokeLinejoin="round" />
  </svg>
);

const Chevron = ({ down }: { down?: boolean }) => (
  <svg width="14" height="16" viewBox="0 0 14 16">
    <path d={down ? 'M1 4l6 7 6-7' : 'M3 1l8 7-8 7'} stroke="#8c8c8c" strokeWidth="2" fill="none" />
  </svg>
);

const StripChevron = () => (
  <svg width="16" height="24" viewBox="0 0 16 24">
    <path d="M13 2L3 12l10 10" stroke="#f2f2f2" strokeWidth="4" fill="none" strokeLinecap="round" strokeLinejoin="round" />
  </svg>
);

type RowData = {
  label: string;
  tone: 'plain' | 'blue' | 'red';
  icon: React.ReactNode;
  arrow?: 'right' | 'down';
  indent?: number;
  value?: string;
  checked?: boolean;
};

const rows: RowData[] = [
  { label: 'Global Options', tone: 'plain', icon: <GearIcon />, arrow: 'right' },
  { label: 'Global Status: Ok', tone: 'plain', icon: <CheckGlyph />, arrow: 'down' },
  { label: 'Fixed Frame', tone: 'plain', icon: <CheckGlyph />, indent: 40, value: 'OK' },
  { label: 'Grid', tone: 'blue', icon: <GridIcon />, arrow: 'right', checked: true },
  { label: 'TF', tone: 'blue', icon: <TfIcon />, arrow: 'right', checked: true },
  { label: 'Submaps', tone: 'red', icon: <ErrorIcon />, checked: true },
  { label: 'PointCloud2', tone: 'blue', icon: <CloudIcon />, arrow: 'right', checked: true },
  { label: 'Map', tone: 'plain', icon: <MapIcon />, arrow: 'right', checked: false },
  { label: 'Submaps', tone: 'red', icon: <ErrorIcon />, checked: true },
  { label: 'MarkerArray', tone: 'blue', icon: <MarkerArrayIcon />, arrow: 'right', checked: true },
  { label: 'Submaps', tone: 'red', icon: <ErrorIcon />, checked: true },
  { label: 'LaserScan', tone: 'red', icon: <WarnIcon />, arrow: 'right', checked: true },
  { label: 'Pose', tone: 'blue', icon: <PoseIcon />, arrow: 'right', checked: true },
  { label: 'MarkerArray', tone: 'red', icon: <WarnIcon />, arrow: 'right', checked: true },
  { label: 'MarkerArray', tone: 'red', icon: <WarnIcon />, arrow: 'right', checked: true },
  { label: 'Marker', tone: 'blue', icon: <MarkerIcon />, arrow: 'right', checked: true },
];

const tools = [
  { label: 'Interact', icon: <HandIcon />, width: 140, active: true },
  { label: 'Move Camera', icon: <MoveIcon />, width: 204 },
  { label: 'Select', icon: <SelectIcon />, width: 125 },
  { label: 'Focus Camera', icon: <FocusIcon />, width: 206 },
  { label: 'Measure', icon: <RulerIcon />, width: 147 },
  { label: '2D Pose Estimate', icon: <SlashIcon color="#12e818" />, width: 243 },
  { label: '2D Nav Goal', icon: <SlashIcon color="#ee10c8" />, width: 193 },
  { label: 'Publish Point', icon: <PinIcon />, width: 204 },
];

const stamps = [
  { label: 'ROS Time:', value: '1630570670.96', width: 145 },
  { label: 'ROS Elapsed:', value: '37.48', width: 182 },
  { label: 'Wall Time:', value: '1631570650.04', width: 146 },
  { label: 'Wall Elapsed:', value: '131.53', width: 182 },
];

export default function App() {
  return (
    <Window>
      <GlobalStyle />
      <TitleBar>
        <Light $color="#fe5f57"><LightDot /></Light>
        <Light $color="#febc2e" />
        <Light $color="#28c840" />
        <Title>xycar_mapping.rviz - RViz</Title>
      </TitleBar>

      <Toolbar>
        <Grip><span /><span /><span /><span /><span /></Grip>
        {tools.map(t => (
          <Tool key={t.label} $active={t.active}>
            {t.icon}
            <ToolLabel $width={t.width}>{t.label}</ToolLabel>
          </Tool>
        ))}
        <Separator />
        <ViewTool $width={92} $left={11}><PlusIcon /></ViewTool>
        <ViewTool $width={70} $left={11}><MinusIcon /><CaretIcon /></ViewTool>
        <ViewTool $width={70} $left={21}><EyeIcon /><CaretIcon /></ViewTool>
      </Toolbar>

      <Main>
        <Sidebar>
          <DockHeader $height={48}>
            <MonitorIcon />
            <DockTitle>Displays</DockTitle>
            <FloatButton />
          </DockHeader>
          <Tree>
            {rows.map((r, i) => (
              <Row key={i}>
                <NameCell $indent={r.indent ?? 0}>
                  <Arrow>{r.arrow && <Chevron down={r.arrow === 'down'} />}</Arrow>
                  <IconSlot>{r.icon}</IconSlot>
                  <Name $tone={r.tone}>{r.label}</Name>
                </NameCell>
                <ValueCell>
                  {r.value}
                  {r.checked !== undefined && <Check $on={r.checked}>{r.checked && <TickIcon />}</Check>}
                </ValueCell>
              </Row>
            ))}
            <TreeFill />
          </Tree>
          <Splitter><span /></Splitter>
          <Description />
          <ButtonBar>
            <PanelButton $width={105}>Add</PanelButton>
            <PanelButton $width={172} $off>Duplicate</PanelButton>
            <PanelButton $width={155} $off>Remove</PanelButton>
            <PanelButton $width={154} $off>Rename</PanelButton>
          </ButtonBar>
        </Sidebar>

        <LeftStrip><StripChevron /></LeftStrip>
        <Viewport><MapView /></Viewport>
        <RightStrip><StripChevron /></RightStrip>
      </Main>

      <TimeDock>
        <DockHeader $height={49} $nudge={3}>
          <ClockIcon />
          <DockTitle>Time</DockTitle>
          <FloatButton />
        </DockHeader>
        <TimeBar>
          {stamps.map(s => (
            <Stamp key={s.label}>
              <StampLabel $width={s.width}>{s.label}</StampLabel>
              <Field>{s.value}</Field>
            </Stamp>
          ))}
          <Experimental>
            <PlainCheck $on={false} />
            Experimental
          </Experimental>
        </TimeBar>
      </TimeDock>
    </Window>
  );
}
